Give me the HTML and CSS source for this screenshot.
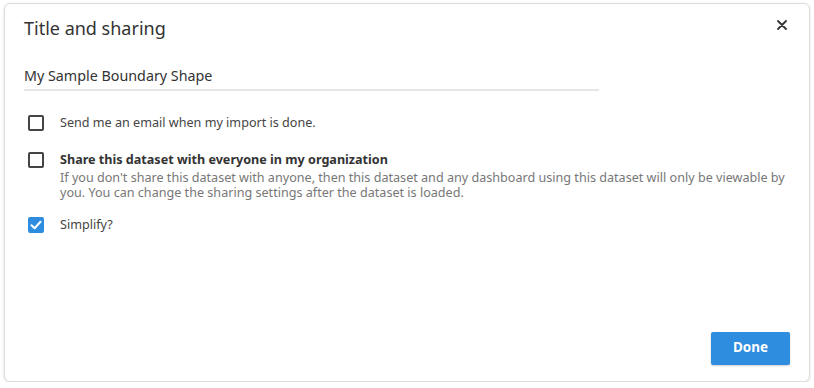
FILE: index.html
```html
<!DOCTYPE html>
<html lang="en">

<head>
  <meta charset="UTF-8">
  <meta name="viewport" content="width=device-width, initial-scale=1.0">
  <title>Title and sharing</title>
  <link rel="stylesheet" href="styles.css">
</head>

<body>
  <div class="dialog">
    <div class="dialog-header">
      <h2 class="dialog-title">Title and sharing</h2>
      <button class="close" aria-label="Close">
        <svg width="10" height="10" viewBox="0 0 10 10">
          <path d="M1 1L9 9M9 1L1 9" stroke="#333" stroke-width="1.8" stroke-linecap="round" />
        </svg>
      </button>
    </div>

    <input class="name-input" type="text" value="My Sample Boundary Shape">

    <div class="options">
      <label class="option option-email">
        <span class="box"></span>
        <span class="option-text">Send me an email when my import is done.</span>
      </label>

      <label class="option option-share">
        <span class="box"></span>
        <span class="option-text">
          <strong>Share this dataset with everyone in my organization</strong>
          <span class="hint">If you don't share this dataset with anyone, then this dataset and any dashboard using this dataset will only be viewable by you. You can change the sharing settings after the dataset is loaded.</span>
        </span>
      </label>

      <label class="option option-simplify">
        <span class="box checked">
          <svg width="12" height="10" viewBox="0 0 12 10">
            <path d="M1.5 5.2L4.6 8.2L10.5 1.8" fill="none" stroke="#fff" stroke-width="2" stroke-linecap="round" stroke-linejoin="round" />
          </svg>
        </span>
        <span class="option-text">Simplify?</span>
      </label>
    </div>

    <div class="dialog-footer">
      <button class="done">Done</button>
    </div>
  </div>
</body>

</html>
```

FILE: styles.css
```css
body {
  margin: 0;
  background: #fff;
  font-family: "Noto Sans", "Open Sans", sans-serif;
  color: #333;
}

.dialog {
  box-sizing: border-box;
  width: 806px;
  height: 379px;
  margin: 3px 0 0 4px;
  border: 1px solid #dcdcdc;
  border-radius: 6px;
  box-shadow: 0 1px 3px rgba(0, 0, 0, 0.12);
  background: #fff;
  padding: 12px 19px 16px 19px;
  display: flex;
  flex-direction: column;
}

.dialog-header {
  display: flex;
  align-items: flex-start;
  justify-content: space-between;
}

.dialog-title {
  margin: 0;
  font-size: 18px;
  font-weight: 400;
  line-height: 24px;
  color: #333;
}

.close {
  border: none;
  background: none;
  padding: 0;
  margin: 3px 2px 0 0;
  width: 12px;
  height: 12px;
  display: flex;
  align-items: center;
  justify-content: center;
  cursor: pointer;
}

.name-input {
  width: 575px;
  margin-top: 26px;
  padding: 0 0 3px 0;
  border: none;
  border-bottom: 2px solid #e6e6e6;
  font-family: inherit;
  font-size: 14.3px;
  line-height: 20px;
  color: #333;
  outline: none;
}

.options {
  display: flex;
  flex-direction: column;
  margin-top: 24px;
  padding-left: 4px;
}

.option {
  display: flex;
  align-items: flex-start;
  gap: 16px;
  font-size: 12.6px;
  line-height: 16px;
  color: #444;
}

.option-share {
  margin-top: 21px;
}

.option-simplify {
  margin-top: 17px;
}

.box {
  box-sizing: border-box;
  flex: none;
  width: 16px;
  height: 16px;
  border: 2px solid #444;
  border-radius: 2px;
  display: flex;
  align-items: center;
  justify-content: center;
}

.box.checked {
  background: #2f8de0;
  border-color: #2f8de0;
}

.option-text strong {
  display: block;
  font-weight: 700;
  color: #333;
}

.hint {
  display: block;
  margin-top: 2px;
  line-height: 15px;
  color: #777;
}

.dialog-footer {
  margin-top: auto;
  display: flex;
  justify-content: flex-end;
}

.done {
  width: 79px;
  height: 33px;
  padding: 0 0 3px 0;
  border: none;
  border-radius: 2px;
  background: #2f8de0;
  color: #fff;
  font-family: inherit;
  font-size: 13.5px;
  font-weight: 700;
  box-shadow: 0 1px 2px rgba(0, 0, 0, 0.2);
  cursor: pointer;
}
```
